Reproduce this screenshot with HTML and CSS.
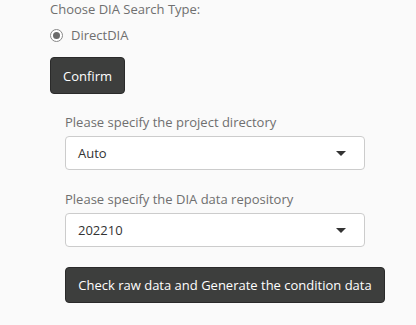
FILE: index.html
```html
<!DOCTYPE html>
<html lang="en">
<head>
    <meta charset="UTF-8">
    <title>DIA Search</title>
    <link rel="stylesheet" href="styles.css">
</head>
<body>
    <div class="search-type">
        <div class="control-label">Choose DIA Search Type:</div>
        <label class="radio">
            <span class="radio-dot"></span>
            <span>DirectDIA</span>
        </label>
        <button class="btn btn-confirm">Confirm</button>
    </div>

    <!-- Data selection -->
    <div class="data-panel">
        <div class="form-group">
            <div class="control-label">Please specify the project directory</div>
            <div class="select">
                <span>Auto</span>
                <span class="caret"></span>
            </div>
        </div>
        <div class="form-group">
            <div class="control-label">Please specify the DIA data repository</div>
            <div class="select">
                <span>202210</span>
                <span class="caret"></span>
            </div>
        </div>
        <button class="btn btn-check">Check raw data and Generate the condition data</button>
    </div>
</body>
</html>
```
FILE: styles.css
```css
body {
    margin: 0;
    background-color: #fafafa;
    font-family: 'Open Sans', sans-serif;
    font-size: 13px;
    line-height: 18px;
    color: #333;
}

.control-label {
    color: #6f6f6f;
}

/* Search type */
.search-type {
    display: flex;
    flex-direction: column;
    align-items: flex-start;
    padding-left: 50px;
}

.radio {
    display: flex;
    align-items: center;
    gap: 8px;
    margin-top: 8px;
    color: #6f6f6f;
}

.radio-dot {
    box-sizing: border-box;
    width: 13px;
    height: 13px;
    border: 1px solid #888;
    border-radius: 50%;
    background: #fff;
    position: relative;
}

.radio-dot::after {
    content: '';
    position: absolute;
    top: 2px;
    left: 2px;
    width: 7px;
    height: 7px;
    border-radius: 50%;
    background: #6a6a6a;
}

.btn {
    font-family: 'Open Sans', sans-serif;
    font-size: 13px;
    color: #fff;
    background-color: #3d3e3d;
    border: 1px solid #2a2a2a;
    border-radius: 4px;
    cursor: pointer;
}

.btn-confirm {
    margin-top: 13px;
    width: 75px;
    height: 37px;
    padding: 0;
}

/* Data selection panel */
.data-panel {
    display: flex;
    flex-direction: column;
    align-items: flex-start;
    padding-left: 65px;
    margin-top: 19px;
}

.form-group {
    margin-bottom: 20px;
}

.select {
    display: flex;
    align-items: center;
    justify-content: space-between;
    box-sizing: border-box;
    width: 300px;
    height: 34px;
    margin-top: 5px;
    padding: 0 18px 0 12px;
    background: #fff;
    border: 1px solid #ccc;
    border-radius: 4px;
    color: #333;
}

.caret {
    width: 0;
    height: 0;
    border-left: 5px solid transparent;
    border-right: 5px solid transparent;
    border-top: 5px solid #333;
}

.btn-check {
    width: 320px;
    height: 36px;
    padding: 0;
}
```
